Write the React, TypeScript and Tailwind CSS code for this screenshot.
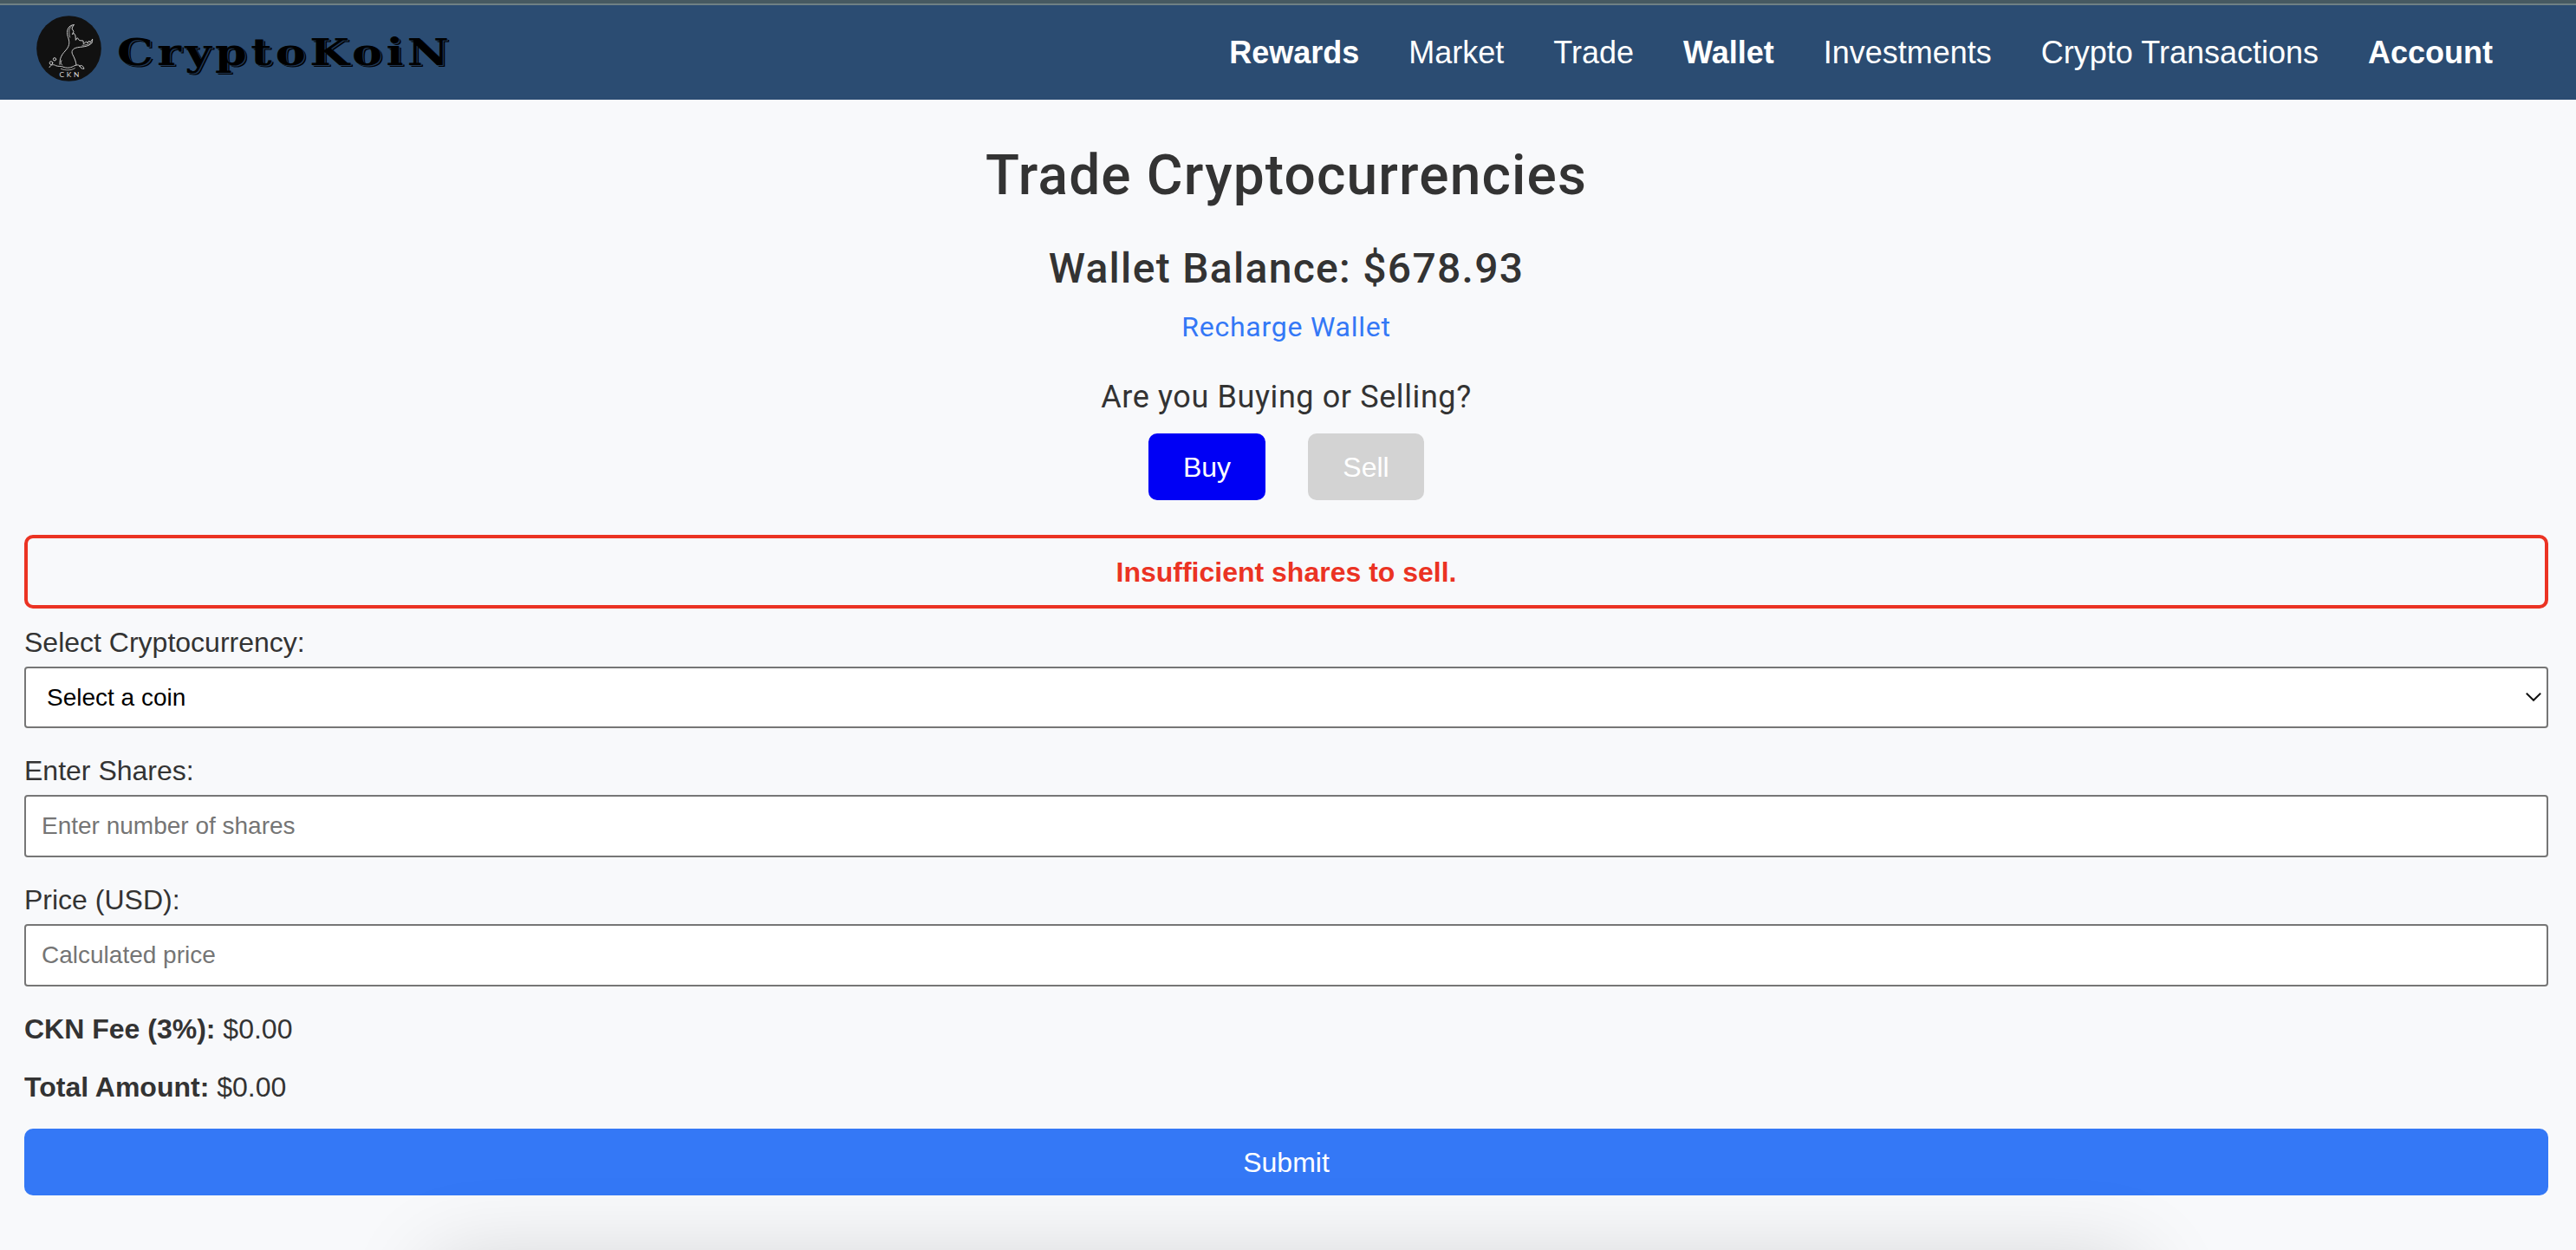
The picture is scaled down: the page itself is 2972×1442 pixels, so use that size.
import type { ReactNode } from "react";

const links = [
  { label: "Rewards", bold: true },
  { label: "Market", bold: false },
  { label: "Trade", bold: false },
  { label: "Wallet", bold: true },
  { label: "Investments", bold: false },
  { label: "Crypto Transactions", bold: false },
  { label: "Account", bold: true },
];

const controlClass =
  "block w-full appearance-none rounded-[4px] border-2 border-[#767676] bg-white text-[28px] placeholder:text-[#757575] placeholder:opacity-100 outline-none";

function WhaleBadge() {
  return (
    <svg className="mb-[10px] h-[76px] w-[75px] shrink-0" viewBox="37 23 225 228" aria-hidden="true">
      <ellipse cx="149.5" cy="137" rx="112" ry="113.5" fill="#111111" />
      <g fill="none" stroke="#c9c9c9" strokeWidth="3" strokeLinecap="round" strokeLinejoin="round">
        <path d="M168 55 C147 54 139 76 146 96 C154 118 151 130 136 146 C124 159 117 172 118 192" />
        <path d="M160 57 C149 66 148 82 153 98" strokeWidth="2.4" />
        <path d="M165 56 L160 68 L166 78 L161 88 L167 84 L172 92 L173 108 L179 100 L186 109 L199 110 L200 121 L210 113 L214 119 L219 110 L223 116 L231 105" />
        <path d="M231 105 C234 126 210 130 188 132 C164 134 156 144 162 157 C169 170 174 182 175 194" />
        <path d="M230 116 C220 123 208 125 196 126" strokeWidth="2.2" />
        <path d="M124 178 C121 184 121 190 126 194" strokeWidth="2.4" />
        <path d="M82 202 C86 192 97 191 104 196 C114 200 122 197 128 200 C142 206 154 204 164 199 C176 192 184 192 190 199" />
        <path d="M122 207 C138 214 158 213 170 205" strokeWidth="2.4" />
        <path d="M187 198 C190 193 198 194 202 207 C196 208 189 205 187 198 Z" />
        <circle cx="88" cy="187" r="5.5" />
        <circle cx="100" cy="174" r="5" />
      </g>
      <text x="155" y="235" textAnchor="middle" fill="#dddddd" fontFamily="Lato, sans-serif" fontSize="25" fontWeight="400" letterSpacing="8">
        CKN
      </text>
    </svg>
  );
}

function Header() {
  return (
    <header>
      <div className="h-1 bg-[#465961]" />
      <div className="h-0.5 bg-[#6f8084]" />
      <div className="flex h-[109px] items-center justify-between bg-[#2b4c72] pl-[42px] pr-[96px]">
        <div className="flex items-center">
          <WhaleBadge />
          <div className="ml-[18px] w-[385px]">
            <span className="inline-block origin-left scale-x-[1.25] whitespace-nowrap font-['DejaVu_Serif',serif] text-[42px] leading-[50px] font-bold tracking-[3.5px] text-black [text-shadow:1px_1px_0_#1f3653,2px_2px_0_#000]">
              CryptoKoiN
            </span>
          </div>
        </div>
        <nav className="flex gap-[57px] text-[36px] leading-[44px] whitespace-nowrap text-white">
          {links.map((l) => (
            <a key={l.label} href="#" className={l.bold ? "font-bold" : "font-normal"}>
              {l.label}
            </a>
          ))}
        </nav>
      </div>
    </header>
  );
}

function Field({ label, children }: { label: string; children: ReactNode }) {
  return (
    <label className="block">
      <span className="mb-[10px] block leading-[36px]">{label}</span>
      {children}
    </label>
  );
}

export default function App() {
  return (
    <div className="relative h-[1442px] w-full overflow-hidden bg-[#f8f9fb] font-['Liberation_Sans',Arial,sans-serif] text-[32px] leading-[36px] text-[#333333]">
      <Header />
      <main className="pl-[28px] pr-[32px] pt-[48px]">
        <section className="flex flex-col items-center font-['Roboto',sans-serif]">
          <h1 className="text-[64px] leading-[80px] font-medium tracking-[1.16px]">Trade Cryptocurrencies</h1>
          <h2 className="mt-[37px] text-[48px] leading-[60px] font-medium tracking-[1.3px]">Wallet Balance: $678.93</h2>
          <a href="#" className="mt-[17px] leading-[40px] tracking-[0.75px] text-[#3478f6]">
            Recharge Wallet
          </a>
          <p className="mt-[39px] text-[36px] leading-[44px] tracking-[0.6px]">Are you Buying or Selling?</p>
        </section>
        <div className="mt-[20px] flex justify-center gap-[49px] text-white">
          <button className="h-[77px] w-[135px] rounded-[10px] bg-[#0000f5]">Buy</button>
          <button className="h-[77px] w-[134px] rounded-[10px] bg-[#d3d3d3]">Sell</button>
        </div>
        <div className="mt-[40px] flex h-[85px] items-center justify-center rounded-[10px] border-4 border-[#eb3323] font-bold text-[#eb3323]">
          Insufficient shares to sell.
        </div>
        <form className="mt-[21px] flex flex-col gap-[31px]">
          <Field label="Select Cryptocurrency:">
            <div className="relative">
              <select className={`${controlClass} h-[71px] pl-[24px] text-black`}>
                <option>Select a coin</option>
              </select>
              <svg className="absolute top-[29px] right-[7px] h-[12px] w-[20px]" viewBox="0 0 20 12" fill="none" stroke="#111" strokeWidth="2">
                <path d="M1.8 1.8 L10 9.8 L18.2 1.8" />
              </svg>
            </div>
          </Field>
          <Field label="Enter Shares:">
            <input className={`${controlClass} h-[72px] pl-[18px]`} placeholder="Enter number of shares" />
          </Field>
          <Field label="Price (USD):">
            <input className={`${controlClass} h-[72px] pl-[18px]`} placeholder="Calculated price" />
          </Field>
          <p>
            <strong>CKN Fee (3%):</strong> $0.00
          </p>
          <p>
            <strong>Total Amount:</strong> $0.00
          </p>
          <button type="button" className="-mt-px h-[77px] rounded-[10px] bg-[#3478f6] text-white">
            Submit
          </button>
        </form>
      </main>
      <div className="pointer-events-none absolute top-[1456px] left-[500px] h-[200px] w-[1968px] rounded-[20px] shadow-[0_0_100px_rgba(0,0,0,0.17)]" />
    </div>
  );
}
